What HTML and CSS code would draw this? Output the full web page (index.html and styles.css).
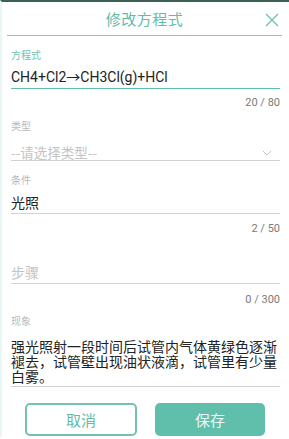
FILE: index.html
```html
<!DOCTYPE html>
<html lang="zh-CN">
<head>
<meta charset="utf-8">
<link rel="stylesheet" href="styles.css">
</head>
<body>
<div class="dialog">
  <div class="header">
    <div class="title">修改方程式</div>
    <svg class="close" width="14" height="14" viewBox="0 0 14 14"><path d="M1 1L13 13M13 1L1 13" stroke="#6cc4b2" stroke-width="1.4" fill="none"/></svg>
  </div>
  <div class="form">
    <div class="field f1">
      <div class="label active">方程式</div>
      <div class="input focus">CH4+Cl2→CH3Cl(g)+HCl</div>
      <div class="counter">20 / 80</div>
    </div>
    <div class="field f2">
      <div class="label">类型</div>
      <div class="select">
        <span class="ph">--请选择类型--</span>
        <svg class="chev" width="10" height="6" viewBox="0 0 10 6"><path d="M1 1L5 5L9 1" stroke="#c4c4c4" stroke-width="1" fill="none"/></svg>
      </div>
    </div>
    <div class="field f3">
      <div class="label">条件</div>
      <div class="input">光照</div>
      <div class="counter">2 / 50</div>
    </div>
    <div class="field f4">
      <div class="input ph">步骤</div>
      <div class="counter">0 / 300</div>
    </div>
    <div class="field f5">
      <div class="label">现象</div>
      <div class="textarea">强光照射一段时间后试管内气体黄绿色逐渐褪去，试管壁出现油状液滴，试管里有少量白雾。</div>
    </div>
    <div class="buttons">
      <div class="btn cancel">取消</div>
      <div class="btn save">保存</div>
    </div>
  </div>
</div>
</body>
</html>
```
FILE: styles.css
```css
html, body {
  margin: 0;
  padding: 0;
  background: #ffffff;
}
body {
  width: 289px;
  height: 439px;
  overflow: hidden;
  font-family: Roboto, "Noto Sans CJK SC", sans-serif;
}
.dialog {
  border-top: 2px solid #3c5f56;
  border-left: 2px solid #e8f7f5;
  height: 437px;
  box-sizing: border-box;
  position: relative;
}
.header {
  height: 33px;
  margin: 0 7px 0 5px;
  border-bottom: 1px solid #7fcbbc;
  display: flex;
  align-items: center;
  justify-content: center;
  position: relative;
}
.title {
  font-family: "Noto Sans CJK SC", sans-serif;
  font-size: 15px;
  color: #5fbca8;
  line-height: 20px;
  margin-top: 1px;
  letter-spacing: 0.5px;
}
.close {
  position: absolute;
  right: 3px;
  top: 11px;
}
.form {
  padding: 0 9px 0 9px;
}
.label {
  font-family: "Noto Sans CJK SC", sans-serif;
  font-size: 10px;
  line-height: 14px;
  color: #b8b8b8;
}
.label.active {
  color: #6fc3b1;
}
.input {
  font-size: 14px;
  line-height: 20px;
  color: #222;
  border-bottom: 1px solid #d2d2d2;
  padding-bottom: 1px;
}
.input.focus {
  border-bottom-color: #5fbfaa;
}
.ph {
  color: #c4c4c4;
}
.counter {
  font-size: 11px;
  line-height: 14px;
  color: #7a7a7a;
  text-align: right;
}
.f1 { padding-top: 12px; }
.f1 .label { margin-bottom: 5px; }
.f1 .counter { margin-top: 7px; }
.f2 { padding-top: 9px; }
.f2 .label { margin-bottom: 11px; }
.select {
  display: flex;
  align-items: center;
  justify-content: space-between;
  font-family: "Noto Sans CJK SC", sans-serif;
  font-size: 13.5px;
  line-height: 16px;
  border-bottom: 1px solid #d2d2d2;
}
.chev {
  margin-right: 8px;
  margin-top: 2px;
}
.f3 { padding-top: 12px; }
.f3 .label { margin-bottom: 5px; }
.f3 .input { font-family: "Noto Sans CJK SC", sans-serif; }
.f3 .counter { margin-top: 8px; }
.f4 { padding-top: 26px; }
.f4 .input { font-family: "Noto Sans CJK SC", sans-serif; }
.f4 .counter { margin-top: 9px; }
.f5 { padding-top: 7px; }
.f5 .label { margin-bottom: 11px; }
.textarea {
  font-family: "Noto Sans CJK SC", sans-serif;
  font-size: 14px;
  line-height: 15px;
  color: #222;
  border-bottom: 1px solid #d2d2d2;
  padding-bottom: 2px;
}
.buttons {
  display: flex;
  gap: 18px;
  margin-top: 16px;
  padding-left: 14px;
}
.btn {
  height: 33px;
  box-sizing: border-box;
  border-radius: 5px;
  display: flex;
  align-items: center;
  justify-content: center;
  font-family: "Noto Sans CJK SC", sans-serif;
  font-size: 15px;
}
.cancel {
  width: 112px;
  border: 2px solid #74c1b2;
  color: #5fbca8;
}
.save {
  width: 110px;
  background: #5fbfaa;
  color: #eef8f5;
}
```
